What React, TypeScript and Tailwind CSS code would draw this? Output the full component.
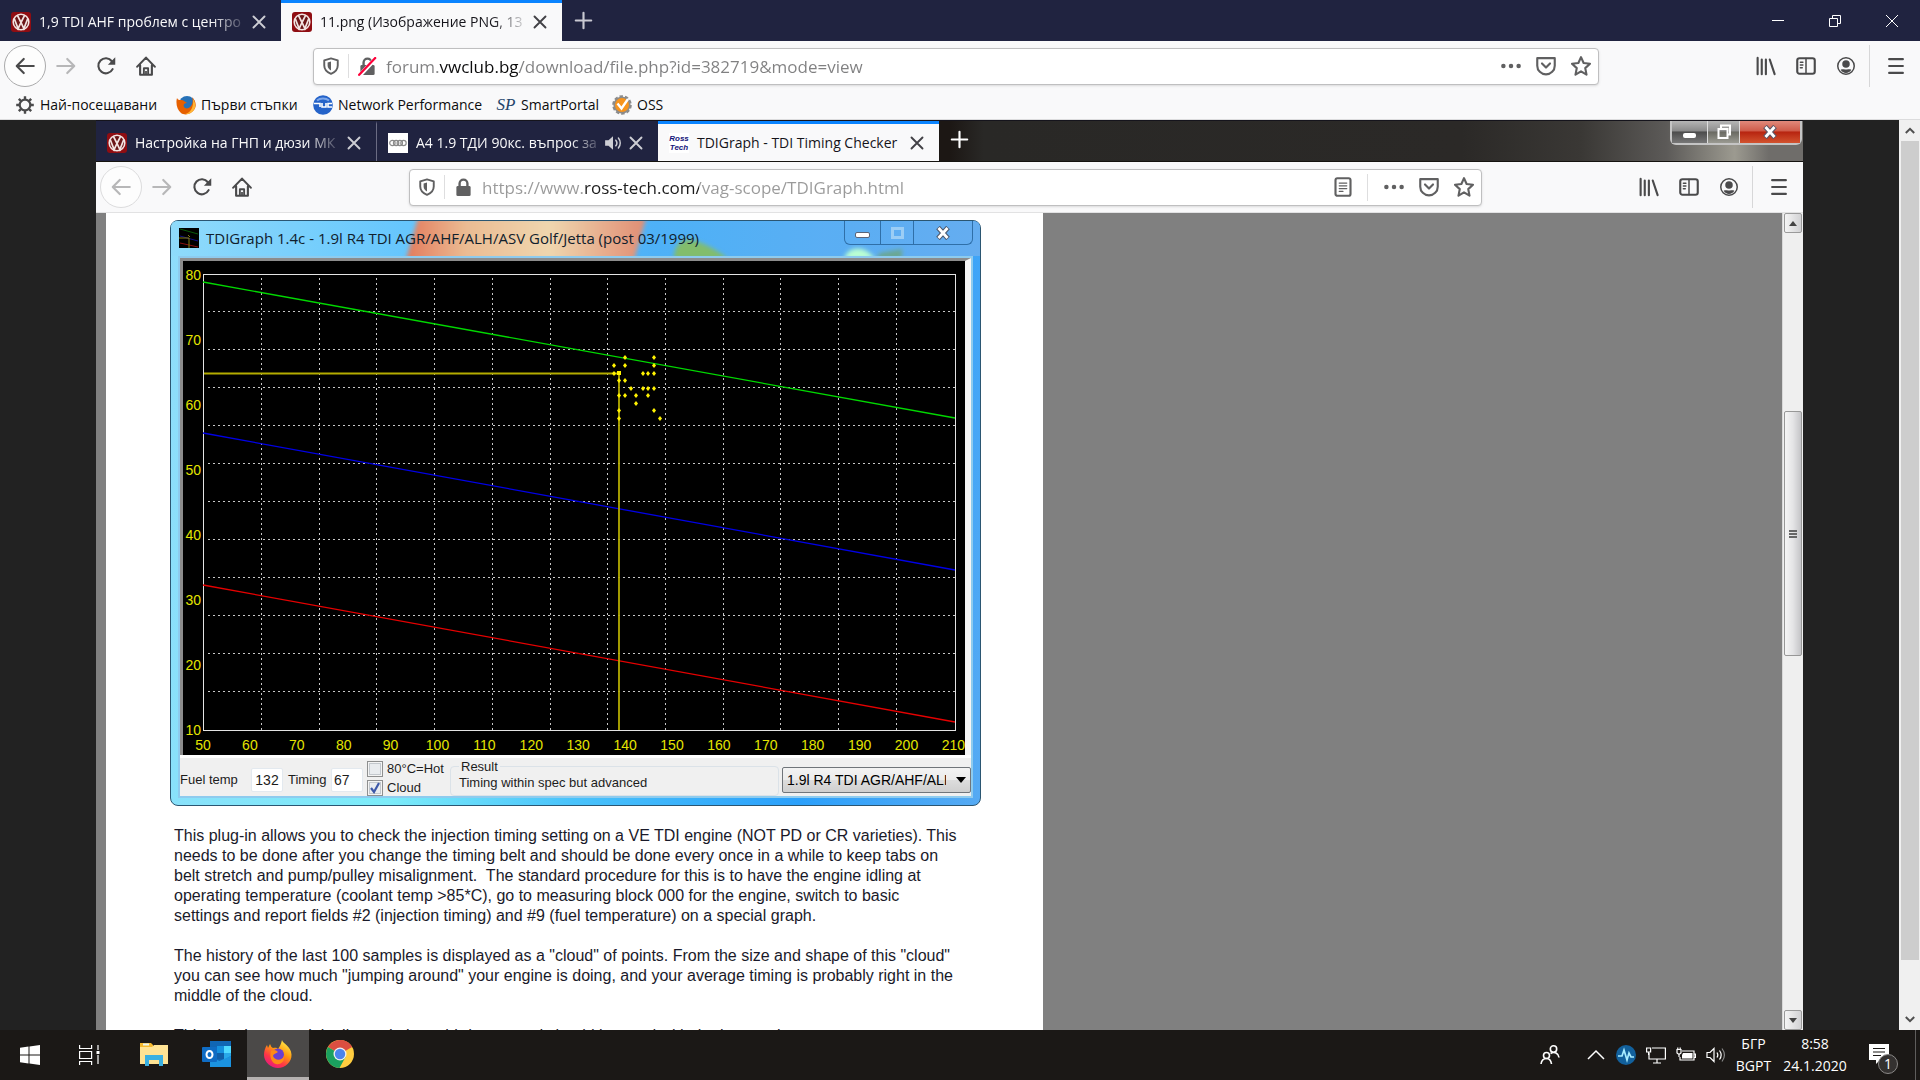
import { useState, type ReactNode } from "react";
import clsx from "clsx";

/* ---------- favicons ---------- */

function VwIcon() {
  return (
    <svg viewBox="0 0 20 20" className="size-5 shrink-0">
      <rect width="20" height="20" rx="3" fill="#8f0d12" />
      <circle cx="10" cy="10" r="7.8" fill="#6b1517" stroke="#f3e4e2" strokeWidth="1.6" />
      <path d="M6.3 3.2 10 10.5l3.7-7.3M3.2 6.5l3.9 10 2.9-6 2.9 6 3.9-10" fill="none" stroke="#f3e4e2" strokeWidth="1.7" />
    </svg>
  );
}

function AudiIcon() {
  return (
    <svg viewBox="0 0 20 20" className="size-5 shrink-0">
      <rect width="20" height="20" fill="#fff" />
      <g fill="none" stroke="#8a8a8a" strokeWidth="1.2">
        <circle cx="4.4" cy="10" r="2.7" />
        <circle cx="8.1" cy="10" r="2.7" />
        <circle cx="11.8" cy="10" r="2.7" />
        <circle cx="15.5" cy="10" r="2.7" />
      </g>
    </svg>
  );
}

function RossTechIcon() {
  return (
    <span className="flex size-5 shrink-0 flex-col items-center justify-center bg-white font-['Liberation_Sans'] text-[8px] leading-[9px] font-bold text-[#14147a] italic">
      <span>Ross</span>
      <span>Tech</span>
    </span>
  );
}

/* ---------- toolbar icons ---------- */

function Glyph({ children, className = "size-5" }: { children: ReactNode; className?: string }) {
  return (
    <svg viewBox="0 0 16 16" className={className} fill="none" stroke="currentColor" strokeWidth="1.7" strokeLinecap="round" strokeLinejoin="round">
      {children}
    </svg>
  );
}

const BackIcon = () => (
  <Glyph>
    <path d="M15 8H1.5M7 2.4 1.4 8 7 13.6" />
  </Glyph>
);
const ForwardIcon = () => (
  <Glyph>
    <path d="M1 8h13.5M9 2.4 14.6 8 9 13.6" />
  </Glyph>
);
const ReloadIcon = () => (
  <Glyph>
    <path d="M13.3 10.5A6 6 0 1 1 12.7 4.2" />
    <path d="M15.4 1v6H9.5z" fill="currentColor" stroke="none" />
  </Glyph>
);
const HomeIcon = () => (
  <Glyph>
    <path d="M1 8.5 8 1.3l7 7.2M3.3 7.5V15h9.4V7.5" />
    <path d="M6.3 14.5V9.8h3.4v4.7" strokeWidth="1.5" />
    <path d="M7.3 12h1.4v3H7.3z" fill="currentColor" stroke="none" />
  </Glyph>
);
const ShieldIcon = () => (
  <Glyph className="size-[18px]">
    <path d="M8 1.2 14 3v4.5c0 3.5-2.5 6-6 7.5-3.5-1.5-6-4-6-7.5V3z" />
    <path d="M8 4v8C6 10.8 5 9.5 5 7.3V4.9z" fill="currentColor" stroke="none" />
  </Glyph>
);
const LockIcon = ({ broken = false }: { broken?: boolean }) => (
  <Glyph className="size-[19px]">
    <path d="M4.7 7V4.7a3.3 3.3 0 0 1 6.6 0V7" strokeWidth="2" />
    <rect x="2" y="6.8" width="12" height="8.4" rx="1.2" fill="currentColor" stroke="none" />
    {broken && (
      <>
        <path d="M1.5 15.5 15 1" stroke="#fff" strokeWidth="3.5" />
        <path d="M1 15 14.5 .8" stroke="#ff0039" strokeWidth="1.9" />
      </>
    )}
  </Glyph>
);
const DotsIcon = () => (
  <Glyph>
    <g fill="currentColor" stroke="none">
      <circle cx="1.9" cy="8" r="1.8" />
      <circle cx="8" cy="8" r="1.8" />
      <circle cx="14.1" cy="8" r="1.8" />
    </g>
  </Glyph>
);
const PocketIcon = () => (
  <Glyph>
    <path d="M1 1.7h14v6a7 7 0 0 1-14 0zM4.8 6 8 9.2 11.2 6" />
  </Glyph>
);
const StarIcon = () => (
  <Glyph>
    <path d="m8 .9 2.1 4.7 5.1.6-3.8 3.5 1 5.2L8 12.3l-4.4 2.6 1-5.2L.8 6.2l5.1-.6z" />
  </Glyph>
);
const ReaderIcon = () => (
  <Glyph>
    <rect x="2" y="1" width="12" height="14" rx="1.5" />
    <path d="M5 4.8h6M5 7h6M5 9.2h6M5 11.4h3" strokeWidth="1" />
  </Glyph>
);
const LibraryIcon = () => (
  <Glyph>
    <path d="M1.3 1.5v13M4.6 2.8v11.7M7.9 2.8v11.7M11 2.8l3.9 11.7" />
  </Glyph>
);
const SidebarIcon = () => (
  <Glyph>
    <rect x="1" y="1.8" width="14" height="12.4" rx="1.8" />
    <path d="M8 2v12M3.5 5h2M3.5 7.2h2M3.5 9.4H5" strokeWidth="1.2" />
  </Glyph>
);
const AccountIcon = () => (
  <Glyph>
    <circle cx="8" cy="8" r="6.6" strokeWidth="1.2" />
    <circle cx="8" cy="6.3" r="3" fill="currentColor" stroke="none" />
    <path d="M3.8 11c1.2-.8 2-.3 4.2-.3s3-.5 4.2.3c-.8 1.7-2.3 2.5-4.2 2.5S4.6 12.7 3.8 11z" fill="currentColor" stroke="none" />
  </Glyph>
);
const MenuIcon = () => (
  <Glyph>
    <path d="M2.5 2.5h11M2.5 8h11M2.5 13.5h11" />
  </Glyph>
);
const CloseIcon = () => (
  <Glyph className="size-4">
    <path d="m2.5 2.5 11 11m0-11-11 11" strokeWidth="1.9" />
  </Glyph>
);
const PlusIcon = () => (
  <Glyph className="size-[19px]">
    <path d="M8 1.5v13M1.5 8h13" strokeWidth="1.8" />
  </Glyph>
);
const SpeakerIcon = () => (
  <Glyph className="size-[18px]">
    <path d="M1 5.5h3L8 2v12l-4-3.5H1z" fill="currentColor" stroke="none" />
    <path d="M10.5 5.5a4 4 0 0 1 0 5M12.8 3.5a7 7 0 0 1 0 9" strokeWidth="1.3" />
  </Glyph>
);

/* ---------- shared browser chrome ---------- */

type TabProps = { icon: ReactNode; title: string; active?: boolean; divider?: boolean; playing?: boolean; fade?: boolean };

function Tab({ icon, title, active, divider, playing, fade = true }: TabProps) {
  return (
    <div
      className={clsx(
        "flex h-full w-[281px] items-center border-t-[3px] pr-3 pl-[11px]",
        active ? "border-t-[#0a84ff] bg-[#f9f9fa] text-[#15141a]" : "border-t-transparent text-[#f9f9fa]",
        divider && "border-r border-r-[#6b6c83]",
      )}
    >
      {icon}
      <span className={clsx("ml-2 flex-1 text-sm whitespace-nowrap", fade && "[mask-image:linear-gradient(to_right,black_82%,transparent)]")}>{title}</span>
      {playing && (
        <button aria-label="Mute tab" className="mr-1 opacity-80">
          <SpeakerIcon />
        </button>
      )}
      <button aria-label="Close tab" className="flex size-5 items-center justify-center opacity-80">
        <CloseIcon />
      </button>
    </div>
  );
}

function ToolButton({ label, children, faded }: { label: string; children: ReactNode; faded?: boolean }) {
  return (
    <button aria-label={label} className={clsx("flex h-10 w-10 shrink-0 items-center justify-center", faded ? "text-[#b7b7b8]" : "text-[#4a4a4b]")}>
      {children}
    </button>
  );
}

type ToolbarProps = { url: string; urlClass: string; secure?: boolean; reader?: boolean; canGoBack?: boolean };

function Toolbar({ url, urlClass, secure, reader, canGoBack }: ToolbarProps) {
  const [value, setValue] = useState(url);
  return (
    <div className="flex h-[50px] shrink-0 items-center bg-[#f9f9fa] px-1">
      <button
        aria-label="Back"
        className={clsx(
          "flex size-[42px] shrink-0 items-center justify-center rounded-full border bg-white/60",
          canGoBack ? "border-[#aaaaab] text-[#4a4a4b]" : "border-[#dcdcdd] text-[#b7b7b8]",
        )}
      >
        <BackIcon />
      </button>
      <ToolButton label="Forward" faded>
        <ForwardIcon />
      </ToolButton>
      <ToolButton label="Reload">
        <ReloadIcon />
      </ToolButton>
      <ToolButton label="Home">
        <HomeIcon />
      </ToolButton>
      <div className="w-[147px] shrink-0" />
      <div className="flex h-[37px] min-w-0 flex-1 items-center rounded-sm border border-[#bfbfc0] bg-white text-[#606061] shadow-sm">
        <span className="flex w-[35px] justify-center border-r border-[#dededf] py-[3px]">
          <ShieldIcon />
        </span>
        <span className="flex w-[36px] justify-center">
          <LockIcon broken={!secure} />
        </span>
        <input
          aria-label="Address"
          value={value}
          onChange={(e) => setValue(e.target.value)}
          className={clsx("h-full min-w-0 flex-1 bg-clip-text pt-px pl-px text-[17px] text-transparent caret-black outline-none", urlClass)}
        />
        {reader && (
          <button aria-label="Reader view" className="mr-2 flex h-[27px] w-[50px] items-center justify-center border-r border-[#dededf]">
            <ReaderIcon />
          </button>
        )}
        <button aria-label="Page actions" className="flex w-[35px] justify-center">
          <DotsIcon />
        </button>
        <button aria-label="Save to Pocket" className="flex w-[35px] justify-center">
          <PocketIcon />
        </button>
        <button aria-label="Bookmark" className="flex w-[35px] justify-center">
          <StarIcon />
        </button>
      </div>
      <div className="w-[147px] shrink-0" />
      <ToolButton label="Library">
        <LibraryIcon />
      </ToolButton>
      <ToolButton label="Sidebar">
        <SidebarIcon />
      </ToolButton>
      <ToolButton label="Account">
        <AccountIcon />
      </ToolButton>
      <div className="mr-[6px] ml-[3px] h-[42px] border-l border-[#d7d7d8]" />
      <ToolButton label="Menu">
        <MenuIcon />
      </ToolButton>
    </div>
  );
}

/* ---------- bookmarks ---------- */

const bookmarks = [
  {
    label: "Най-посещавани",
    width: "w-[161px]",
    icon: (
      <svg viewBox="0 0 20 20" className="size-5" fill="none" stroke="#4a4a4b">
        <circle cx="10" cy="10" r="5.3" strokeWidth="2.2" />
        <path d="M10 1.2v3M10 15.8v3M1.2 10h3M15.8 10h3M3.8 3.8l2.1 2.1M14.1 14.1l2.1 2.1M3.8 16.2l2.1-2.1M14.1 5.9l2.1-2.1" strokeWidth="2.4" />
      </svg>
    ),
  },
  {
    label: "Първи стъпки",
    width: "w-[137px]",
    icon: (
      <svg viewBox="0 0 20 20" className="size-5">
        <circle cx="11" cy="9" r="8" fill="#2672b8" />
        <path d="M1 3c1 2 2 2 4 2 3 0 4 2 6 3-3 0-4 2-3 4s5 2 7-1 2-6 1-9c4 4 5 9 2 13s-9 6-13 3S-.5 8 1 3z" fill="#e66000" />
        <path d="M17 4c3 4 3 9 0 12-2 2.5-5 3.5-8 3 5-1 9-6 8-15z" fill="#ffb636" />
      </svg>
    ),
  },
  {
    label: "Network Performance",
    width: "w-[183px]",
    icon: (
      <svg viewBox="0 0 20 20" className="size-5">
        <circle cx="10" cy="10" r="9.8" fill="#2563c9" />
        <path d="M4 5.5a8 6 0 0 1 12 0" stroke="#7ea8ea" strokeWidth="2" fill="none" />
        <path d="M1 8.5h6V12M9 8v4h4V8M19 8.5h-4V12h4" stroke="#fff" strokeWidth="1.6" fill="none" />
      </svg>
    ),
  },
  {
    label: "SmartPortal",
    width: "w-[116px]",
    icon: <span className="font-['Liberation_Serif'] text-[17px] leading-5 text-[#24466b] italic">SP</span>,
  },
  {
    label: "OSS",
    width: "w-[60px]",
    icon: (
      <svg viewBox="0 0 20 20" className="size-5">
        <circle cx="10" cy="10" r="8.6" fill="#8b8b8b" stroke="#8b8b8b" strokeWidth="2.4" strokeDasharray="3.4 2" />
        <circle cx="10" cy="10" r="7" fill="#f7941d" />
        <path d="m5.5 8.5 4 5L16 4" stroke="#fff" strokeWidth="2.4" fill="none" />
      </svg>
    ),
  },
];

function BookmarksBar() {
  return (
    <nav className="flex h-[29px] shrink-0 items-center border-b border-[#dcdcdd] bg-[#f9f9fa] pl-[15px] text-sm text-[#0c0c0d]">
      {bookmarks.map((b) => (
        <a key={b.label} href="#" className={clsx("flex shrink-0 items-center gap-[5px] whitespace-nowrap", b.width)}>
          <span className="flex w-5 shrink-0 justify-center">{b.icon}</span>
          {b.label}
        </a>
      ))}
    </nav>
  );
}

/* ---------- TDIGraph window ---------- */

const xLabels = [50, 60, 70, 80, 90, 100, 110, 120, 130, 140, 150, 160, 170, 180, 190, 200, 210];
const yLabels = [80, 70, 60, 50, 40, 30, 20, 10];

const cloud = [
  [442, 96], [471, 96], [431, 104], [442, 104], [471, 104], [431, 112], [460, 112], [465, 112], [471, 112],
  [436, 119], [442, 119], [448, 127], [460, 127], [465, 127], [471, 127], [436, 134], [442, 134], [453, 134],
  [465, 134], [453, 142], [436, 149], [471, 149], [436, 157], [477, 157],
];

const curves = [
  { color: "#00d800", from: 21, to: 157 },
  { color: "#0000e6", from: 172, to: 309 },
  { color: "#e60000", from: 324, to: 461 },
];

function Chart() {
  return (
    <svg viewBox="0 0 782 494" className="block w-full bg-black">
      <g stroke="#c8c8c8" strokeWidth="1" strokeDasharray="2 3">
        {Array.from({ length: 12 }, (_, i) => (
          <line key={i} x1={78.5 + Math.round(i * 57.7)} x2={78.5 + Math.round(i * 57.7)} y1="17" y2="469" />
        ))}
        {Array.from({ length: 11 }, (_, i) => (
          <line key={i} x1="25" x2="772" y1={50.5 + i * 38} y2={50.5 + i * 38} />
        ))}
      </g>
      <rect x="20.5" y="13.5" width="752" height="456" fill="none" stroke="#e4e4e4" />
      {curves.map((c) => (
        <line key={c.color} x1="20" y1={c.from} x2="772" y2={c.to} stroke={c.color} strokeWidth="1.3" />
      ))}
      <path d="M21 112.5h415V469" fill="none" stroke="#b4ac00" strokeWidth="1.8" />
      <g fill="#fff200">
        {cloud.map(([x, y]) => (
          <path key={`${x}-${y}`} d={`M${x} ${y - 2}l2 2.5-2 2.5-2-2.5z`} />
        ))}
        <rect x="434" y="110" width="4" height="4" />
      </g>
      <g fill="#e4e400" fontFamily="Liberation Sans, sans-serif" fontSize="14">
        {yLabels.map((l, i) => (
          <text key={l} x="18" y={19 + i * 65} textAnchor="end">
            {l}
          </text>
        ))}
        {xLabels.map((l, i) => (
          <text key={l} x={20 + i * 46.9} y="489" textAnchor="middle">
            {l}
          </text>
        ))}
      </g>
    </svg>
  );
}

function GraphIcon() {
  return (
    <svg viewBox="0 0 20 20" className="size-5 shrink-0">
      <rect width="20" height="20" fill="#000" />
      <path d="m1 1 18 5" stroke="#0a5a0a" />
      <path d="m1 8 18 5" stroke="#11118a" />
      <path d="m1 15 18 4" stroke="#8a1111" />
      <path d="M0 10h10v10M9 7l2 2" stroke="#857c10" fill="none" />
    </svg>
  );
}

function GraphTitleBar() {
  return (
    <div className="relative flex h-[35px] items-start justify-between overflow-hidden rounded-t-md">
      <svg viewBox="0 0 809 35" preserveAspectRatio="none" className="absolute inset-0 size-full">
        <defs>
          <linearGradient id="sky">
            <stop offset="0" stopColor="#86d8fb" />
            <stop offset=".3" stopColor="#58c1fd" />
            <stop offset=".6" stopColor="#3fabf7" />
            <stop offset="1" stopColor="#58a6ef" />
          </linearGradient>
          <linearGradient id="flag">
            <stop offset="0" stopColor="#e0704f" />
            <stop offset=".25" stopColor="#eab68a" />
            <stop offset=".6" stopColor="#eed3a8" />
            <stop offset="1" stopColor="#de8468" />
          </linearGradient>
          <filter id="soft">
            <feGaussianBlur stdDeviation="2" />
          </filter>
        </defs>
        <rect width="809" height="35" fill="url(#sky)" />
        <g filter="url(#soft)">
          <path d="M247-3h228l-12 42H235z" fill="url(#flag)" />
          <path d="M503 38c0-18 12-22 22-18s20 8 32 18z" fill="#78b860" />
          <path d="M673 38c3-12 20-16 31 0z" fill="#b4ffd0" />
          <path d="m705 38 4-6 22-4v10z" fill="#5ea08a" />
        </g>
        <rect width="809" height="35" fill="#fff" opacity=".08" />
      </svg>
      <div className="relative mt-[7px] ml-2 flex items-center gap-[7px] text-[15px] leading-5 text-[#10202c]">
        <GraphIcon />
        <span className="whitespace-nowrap">TDIGraph 1.4c - 1.9l R4 TDI AGR/AHF/ALH/ASV Golf/Jetta (post 03/1999)</span>
      </div>
      <div className="relative mr-[7px] flex h-6 rounded-b-md border border-t-0 border-[#2f6fa8] text-white">
        <button aria-label="Minimize graph" className="flex w-[36px] items-end justify-center border-r border-[#2f6fa8] pb-[6px]">
          <span className="h-[6px] w-[15px] rounded-xs border border-[#5a6478] bg-white" />
        </button>
        <button aria-label="Maximize graph" className="flex w-[33px] items-center justify-center border-r border-[#2f6fa8]">
          <span className="h-3 w-[13px] border-[3px] border-[#9bcdf5]" />
        </button>
        <button aria-label="Close graph" className="flex w-[58px] items-center justify-center">
          <svg viewBox="0 0 14 14" className="size-[14px]">
            <path d="m2 1.5 10 11m0-11-10 11" stroke="#4d5a70" strokeWidth="5" />
            <path d="m2.5 2 9 10m0-10-9 10" stroke="#fff" strokeWidth="2.8" />
          </svg>
        </button>
      </div>
    </div>
  );
}

const tick = "size-4 appearance-none border border-[#8e8f8f] bg-[#e9ecef] shadow-[inset_0_0_0_1px_#f4f4f4,inset_0_0_0_2px_#c3c8cd]";

function GraphControls() {
  const [hot, setHot] = useState(false);
  const [showCloud, setShowCloud] = useState(true);
  return (
    <div className="flex h-[41px] items-center border-t-[3px] border-white bg-[#f0f0f0] font-['Liberation_Sans'] text-sm leading-4 whitespace-nowrap text-[#1c1c1c]">
      <label htmlFor="fuel" className="mt-[6px] w-[71px] text-[13px]">
        Fuel temp
      </label>
      <input id="fuel" defaultValue="132" className="mt-[6px] h-6 w-8 rounded-xs border border-[#e3e9ef] bg-white text-center" />
      <label htmlFor="timing" className="mt-[6px] ml-[5px] w-[43px] text-[13px]">
        Timing
      </label>
      <input id="timing" defaultValue="67" className="mt-[6px] h-6 w-8 rounded-xs border border-[#e3e9ef] bg-white pl-[2px]" />
      <div className="ml-1 flex w-[83px] flex-col gap-[3px] pt-[3px] text-[13px]">
        <label className="flex h-4 items-center gap-1">
          <input type="checkbox" checked={hot} onChange={(e) => setHot(e.target.checked)} className={tick} />
          80°C=Hot
        </label>
        <label className="relative flex h-4 items-center gap-1">
          <input type="checkbox" checked={showCloud} onChange={(e) => setShowCloud(e.target.checked)} className={tick} />
          Cloud
          {showCloud && (
            <svg viewBox="0 0 16 16" className="pointer-events-none absolute left-0 size-4">
              <path d="m4 8 3 4 5-9" fill="none" stroke="#3d58a8" strokeWidth="2.2" />
            </svg>
          )}
        </label>
      </div>
      <fieldset className="h-[37px] min-w-0 flex-1 rounded-sm border border-[#dbe2e8] pl-2 text-[13px]">
        <legend className="px-[2px]">Result</legend>
        <p>Timing within spec but advanced</p>
      </fieldset>
      <select
        aria-label="Engine"
        className="mt-[6px] ml-[3px] h-[26px] w-[189px] appearance-none overflow-hidden rounded-xs border border-[#70757a] bg-[linear-gradient(#f3f3f3,#ebebeb_50%,#dddddd_50%,#cfcfcf)] pr-6 pl-1 text-black"
      >
        <option>1.9l R4 TDI AGR/AHF/ALH/ASV</option>
      </select>
      <svg viewBox="0 0 10 6" className="pointer-events-none mt-[6px] mr-[5px] -ml-[15px] h-[6px] w-[10px]">
        <path d="M0 0h10L5 6z" />
      </svg>
    </div>
  );
}

function GraphWindow() {
  return (
    <section className="w-[811px] rounded-lg border border-[#2b5672] bg-[linear-gradient(100deg,#8fdcfb,#7cecf9_35%,#49c3fb_55%,#2ba0fb_80%,#56aaf3)]">
      <GraphTitleBar />
      <div className="mx-[7px] mb-[7px] border-2 border-[#8ecbee]">
        <div className="border-t-[3px] border-r-[6px] border-l-[3px] border-t-[#8c8c8c] border-r-[#f6f6f6] border-l-[#8c8c8c]">
          <Chart />
        </div>
        <GraphControls />
      </div>
    </section>
  );
}

/* ---------- nested browser shown by the page ---------- */

function AeroButtons() {
  return (
    <div className="mr-px flex h-6 w-[132px] rounded-b-md border-2 border-t-0 border-[#c4c4c4]">
      <button aria-label="Minimize inner window" className="flex w-[36px] items-end justify-center border-r border-[#ddd] bg-[linear-gradient(#b5b5b5,#8a8a8a_45%,#4c4c4c_50%,#777)] pb-[5px]">
        <span className="h-[5px] w-[13px] rounded-xs bg-white" />
      </button>
      <button aria-label="Restore inner window" className="flex w-[32px] items-center justify-center border-r border-[#ddd] bg-[linear-gradient(#b5b5b5,#8f8f8f_45%,#6a6a62_50%,#9a9a92)]">
        <svg viewBox="0 0 16 16" className="size-4" fill="none" stroke="#fff" strokeWidth="2">
          <path d="M5 4V1.5h9v9h-2" />
          <rect x="2.5" y="5" width="9" height="9" />
        </svg>
      </button>
      <button aria-label="Close inner window" className="flex flex-1 items-center justify-center bg-[linear-gradient(#e0897b,#cf5c4a_45%,#b72410_50%,#d2532f)]">
        <svg viewBox="0 0 14 14" className="size-[14px]">
          <path d="m2 1.5 10 11m0-11-10 11" stroke="#5b5566" strokeWidth="5" />
          <path d="m2.5 2 9 10m0-10-9 10" stroke="#fff" strokeWidth="2.8" />
        </svg>
      </button>
    </div>
  );
}

function InnerScrollbar() {
  const arrow = "flex h-5 w-[18px] items-center justify-center rounded-xs border border-[#9a9a9a] bg-[linear-gradient(to_right,#f5f5f5,#d2d2d4)]";
  return (
    <div className="flex w-[21px] shrink-0 flex-col items-center border-l border-[#d8d8d8] bg-[#efefef]">
      <button aria-label="Scroll up" className={arrow}>
        <svg viewBox="0 0 8 5" className="h-[5px] w-2">
          <path d="M0 5h8L4 0z" fill="#444" />
        </svg>
      </button>
      <div className="flex-[178]" />
      <div className="flex flex-[244] flex-col items-center justify-center gap-px self-center rounded-xs border border-[#979797] bg-[linear-gradient(to_right,#f5f5f5,#e4e4e6_50%,#c4c4c7)] px-1">
        <span className="h-[2px] w-2 bg-[#666]" />
        <span className="h-[2px] w-2 bg-[#666]" />
        <span className="h-[2px] w-2 bg-[#666]" />
      </div>
      <div className="flex-[354]" />
      <button aria-label="Scroll down" className={arrow}>
        <svg viewBox="0 0 8 5" className="h-[5px] w-2">
          <path d="M0 0h8L4 5z" fill="#444" />
        </svg>
      </button>
    </div>
  );
}

function InnerBrowser() {
  return (
    <div className="flex min-h-0 min-w-0 flex-1 flex-col">
      <header className="flex h-[42px] shrink-0 items-start justify-between border-t border-b border-t-[#15141c] border-b-[#15130f] bg-[linear-gradient(to_right,#1c1714_50%,#292826_52%,#2b2927_80%,#3a3835_87%,#5c5a58_92%,#9c9a90_96%,#6f6d6a_98%)]">
        <div className="flex h-full">
          <div className="flex h-full bg-[#202340]">
            <Tab icon={<VwIcon />} title="Настройка на ГНП и дюзи МК" divider />
            <Tab icon={<AudiIcon />} title="А4 1.9 ТДИ 90кс. въпрос за" playing />
          </div>
          <Tab icon={<RossTechIcon />} title="TDIGraph - TDI Timing Checker" active fade={false} />
          <button aria-label="New inner tab" className="flex w-10 items-center justify-center pb-1 text-white">
            <PlusIcon />
          </button>
        </div>
        <AeroButtons />
      </header>
      <Toolbar
        url="https://www.ross-tech.com/vag-scope/TDIGraph.html"
        urlClass="bg-[linear-gradient(to_right,#9a9a9a_103px,#1c1c1c_103px,#1c1c1c_218px,#9a9a9a_218px)]"
        secure
        reader
      />
      <div className="flex min-h-0 flex-1 border-t border-[#e2e2e3] bg-[#808080]">
        <article className="ml-[10px] w-[937px] overflow-hidden bg-white pt-[7px] pl-[64px]">
          <GraphWindow />
          <div className="mt-5 ml-1 w-[810px] space-y-5 font-['Liberation_Sans'] text-base leading-5 text-[#1a1a2a]">
            <p>
              This plug-in allows you to check the injection timing setting on a VE TDI engine (NOT PD or CR varieties). This
              <br />
              needs to be done after you change the timing belt and should be done every once in a while to keep tabs on
              <br />
              belt stretch and pump/pulley misalignment.&nbsp; The standard procedure for this is to have the engine idling at
              <br />
              operating temperature (coolant temp &gt;85*C), go to measuring block 000 for the engine, switch to basic
              <br />
              settings and report fields #2 (injection timing) and #9 (fuel temperature) on a special graph.
            </p>
            <p>
              The history of the last 100 samples is displayed as a "cloud" of points. From the size and shape of this "cloud"
              <br />
              you can see how much "jumping around" your engine is doing, and your average timing is probably right in the
              <br />
              middle of the cloud.
            </p>
            <p>This plug-in was originally made by a third party and should be used with the latest release</p>
          </div>
        </article>
        <div className="flex-1" />
        <InnerScrollbar />
      </div>
    </div>
  );
}

/* ---------- Windows taskbar ---------- */

function FirefoxIcon() {
  return (
    <svg viewBox="0 0 28 28" className="size-7">
      <defs>
        <linearGradient id="fire" x1=".8" y1="0" x2=".2" y2="1">
          <stop offset="0" stopColor="#fff44f" />
          <stop offset=".4" stopColor="#ff980e" />
          <stop offset=".7" stopColor="#ff3647" />
          <stop offset="1" stopColor="#e31587" />
        </linearGradient>
      </defs>
      <path d="M18 0c1 4 9 6 9.5 14.5C28 22 21 28 14 28S0 22 0 15C0 11 1 8 3 5l1 3 2-4c1 2 1 3 3 4 3-.5 4 0 5 1 2-3 3-5 4-9z" fill="url(#fire)" />
      <circle cx="14" cy="14.5" r="6" fill="#6a3fd0" />
      <path d="M7 11c3-2 5-1 7 1-2 2-4 1-5 4 2 5 9 5 11 0 1 6-4 9-8 8s-7-7-5-13z" fill="#ff8a16" />
    </svg>
  );
}

function ChromeIcon() {
  return (
    <svg viewBox="0 0 28 28" className="size-7">
      <circle cx="14" cy="14" r="14" fill="#ffcd40" />
      <path d="M14 14 1.9 7A14 14 0 0 1 26.1 7z" fill="#dc4e41" />
      <path d="M14 14 1.9 7A14 14 0 0 0 13.5 28l6-11z" fill="#1aa15f" />
      <path d="M14 7h12.1A14 14 0 0 0 14 0z" fill="#dc4e41" />
      <circle cx="14" cy="14" r="6.5" fill="#f1f1f1" />
      <circle cx="14" cy="14" r="5.2" fill="#4a84ec" />
    </svg>
  );
}

const pinned = [
  {
    label: "File Explorer",
    icon: (
      <svg viewBox="0 0 28 24" className="h-6 w-7">
        <path d="M0 1h11l2 2v4H0z" fill="#f5b92e" />
        <path d="M3 1.5h6v2H3z" fill="#e9f5ef" />
        <path d="M0 5h12l2-2h14v19H0z" fill="#ffe394" />
        <path d="M5 24V13h18v11h-4v-6H9v6z" fill="#3ab0e2" />
      </svg>
    ),
  },
  {
    label: "Outlook",
    icon: (
      <svg viewBox="0 0 29 28" className="h-7 w-[29px]">
        <path d="M8 1h21v26H8z" fill="#1066b5" />
        <path d="M15 6h7v7h-7z" fill="#1490df" />
        <path d="M22 6h7v7h-7z" fill="#50d9ff" />
        <path d="M15 13h7v6h-7z" fill="#0f5ea8" />
        <path d="M22 13h7v3l-7 4z" fill="#28a8ea" />
        <path d="m8 16 21 11H8zM29 16v11L15 22z" fill="#1b93e0" />
        <rect y="7" width="15" height="15" rx="1" fill="#0f6cc4" />
        <ellipse cx="7.5" cy="14.5" rx="3" ry="3.5" fill="none" stroke="#fff" strokeWidth="2" />
      </svg>
    ),
  },
  { label: "Firefox", icon: <FirefoxIcon />, active: true },
  { label: "Chrome", icon: <ChromeIcon /> },
];

function Taskbar() {
  return (
    <footer className="flex h-[50px] shrink-0 items-center bg-[#1b1816] text-white">
      <button aria-label="Start" className="flex w-[60px] justify-center">
        <svg viewBox="0 0 20 20" className="size-5" fill="#fff">
          <path d="M0 2.8 8.5 1.6v7.9H0zM9.5 1.5 20 0v9.5H9.5zM0 10.5h8.5v7.9L0 17.2zM9.5 10.5H20V20L9.5 18.5z" />
        </svg>
      </button>
      <button aria-label="Task view" className="flex w-[63px] justify-center pr-1">
        <svg viewBox="0 0 21 20" className="h-5 w-[21px]" fill="none" stroke="#fff" strokeWidth="1.2">
          <path d="M.6 0v3.5h12V0M.6 20v-3.5h12V20M.6 6.5h12v7H.6zM19 0v5M19 10v9" />
          <path d="M17.5 6h3v3h-3z" fill="#fff" stroke="none" />
        </svg>
      </button>
      {pinned.map((p) => (
        <button
          key={p.label}
          aria-label={p.label}
          className={clsx("flex h-full w-[62px] items-center justify-center border-b-[3px]", p.active ? "border-[#b5b1b0] bg-[#4b4948]" : "border-transparent")}
        >
          {p.icon}
        </button>
      ))}
      <div className="flex-1" />
      <button aria-label="People" className="mr-[26px]">
        <svg viewBox="0 0 20 20" className="size-5" fill="none" stroke="#fff" strokeWidth="1.6">
          <circle cx="13.5" cy="4" r="3.2" />
          <circle cx="6.5" cy="10.5" r="3" />
          <path d="M1 19c.5-3.5 2.5-5.5 5.5-5.5s4.5 2 5 5.5M10.5 8.5c4-2.5 8 0 8.5 4" />
        </svg>
      </button>
      <div className="flex items-center gap-[10px]">
        <button aria-label="Hidden icons" className="w-5">
          <svg viewBox="0 0 20 20" className="size-5" fill="none" stroke="#fff" strokeWidth="1.5">
            <path d="m2 14 8-8 8 8" />
          </svg>
        </button>
        <button aria-label="Monitor tool" className="w-5">
          <svg viewBox="0 0 20 20" className="size-5">
            <circle cx="10" cy="10" r="10" fill="#12609c" />
            <path d="M2 11h4l2-6 3 10 2-7 2 4h3" fill="none" stroke="#a8ecff" strokeWidth="1.7" />
          </svg>
        </button>
        <button aria-label="Network" className="w-5">
          <svg viewBox="0 0 20 20" className="size-5" fill="none" stroke="#fff" strokeWidth="1.2">
            <path d="M6 3h13.4v11H3V8M11 14v4M7 18h8" />
            <path d="M.6 3h4v4h-4zM2.6 7v3" />
          </svg>
        </button>
        <button aria-label="Battery" className="w-5">
          <svg viewBox="0 0 20 20" className="size-5" fill="none" stroke="#fff" strokeWidth="1.2">
            <path d="M6 6h12v9H4v-3M18 9h1.5v3.5H18" />
            <path d="M7 8h9.5v5.5H6V10z" fill="#fff" stroke="none" />
            <path d="M1 4.5h4V8L3 9.5 1 8zM1.8 2.5v2M4.2 2.5v2M3 9v3" />
          </svg>
        </button>
        <button aria-label="Volume" className="w-5">
          <svg viewBox="0 0 20 20" className="size-5" fill="none" stroke="#fff" strokeWidth="1.2">
            <path d="M1 7.5h3l4-4v13l-4-4H1zM11 7.5c1 1.5 1 3.5 0 5M13.5 5.5c2 2.7 2 6.3 0 9" />
            <path d="M16 3.5c3 4 3 9 0 13" stroke="#888" />
          </svg>
        </button>
      </div>
      <button aria-label="Input language" className="ml-[10px] flex w-[35px] flex-col items-center text-sm leading-[22px]">
        <span>БГР</span>
        <span>BGPT</span>
      </button>
      <button aria-label="Clock" className="ml-[10px] flex w-[68px] flex-col items-center text-sm leading-[22px]">
        <span>8:58</span>
        <span>24.1.2020</span>
      </button>
      <button aria-label="Notifications" className="relative mr-[15px] ml-5 h-8 w-[31px]">
        <svg viewBox="0 0 20 20" className="absolute top-[5px] left-0 size-5" fill="#fff">
          <path d="M0 0h20v16h-9l-4 4v-4H0z" />
          <path d="M4 4.5h12M4 8h12M4 11.5h8" stroke="#1b1816" strokeWidth="1.2" />
        </svg>
        <span className="absolute top-[15px] left-[9px] flex size-5 items-center justify-center rounded-full border border-[#8a8887] bg-[#343130] text-sm">1</span>
      </button>
      <div className="mr-1 h-full border-l border-[#5f5d5c]" />
    </footer>
  );
}

/* ---------- outer window ---------- */

function PageScrollbar() {
  return (
    <div className="flex w-[21px] shrink-0 flex-col items-center bg-[#f0f0f0] text-[#505050]">
      <button aria-label="Page up" className="flex h-[21px] items-center">
        <svg viewBox="0 0 10 7" className="h-[7px] w-[10px]" fill="none" stroke="currentColor" strokeWidth="2">
          <path d="m.8 6 4.2-4.2L9.2 6" />
        </svg>
      </button>
      <div className="w-[18px] flex-[819] bg-[#cdcdcd]" />
      <div className="flex-[49]" />
      <button aria-label="Page down" className="flex h-[21px] items-center">
        <svg viewBox="0 0 10 7" className="h-[7px] w-[10px]" fill="none" stroke="currentColor" strokeWidth="2">
          <path d="m.8 1 4.2 4.2L9.2 1" />
        </svg>
      </button>
    </div>
  );
}

export default function App() {
  return (
    <div className="flex h-screen flex-col overflow-hidden font-['Open_Sans','Noto_Sans',sans-serif]">
      <header className="flex h-[41px] shrink-0 items-stretch justify-between bg-[#202340]">
        <div className="flex">
          <Tab icon={<VwIcon />} title="1,9 TDI AHF проблем с центро" />
          <Tab icon={<VwIcon />} title="11.png (Изображение PNG, 13" active />
          <button aria-label="New tab" className="flex w-[42px] items-center justify-center text-[#c9c9d2]">
            <PlusIcon />
          </button>
        </div>
        <div className="flex text-white">
          <button aria-label="Minimize" className="flex w-[57px] items-center justify-center">
            <span className="w-3 border-t border-white" />
          </button>
          <button aria-label="Restore" className="flex w-[57px] items-center justify-center">
            <svg viewBox="0 0 12 12" className="size-3" fill="none" stroke="currentColor">
              <path d="M3.5 3V.5h8v8H9M.5 3.5h8v8h-8z" />
            </svg>
          </button>
          <button aria-label="Close" className="flex w-[57px] items-center justify-center">
            <svg viewBox="0 0 14 14" className="size-[14px]" stroke="currentColor">
              <path d="m1 1 12 12m0-12L1 13" />
            </svg>
          </button>
        </div>
      </header>
      <Toolbar
        url="forum.vwclub.bg/download/file.php?id=382719&mode=view"
        urlClass="bg-[linear-gradient(to_right,#808081_53px,#0c0c0d_53px,#0c0c0d_134px,#808081_134px)]"
        canGoBack
      />
      <BookmarksBar />
      <main className="flex min-h-0 flex-1 bg-[#222222]">
        <div className="w-24 shrink-0" />
        <InnerBrowser />
        <div className="w-24 shrink-0" />
        <PageScrollbar />
      </main>
      <Taskbar />
    </div>
  );
}
